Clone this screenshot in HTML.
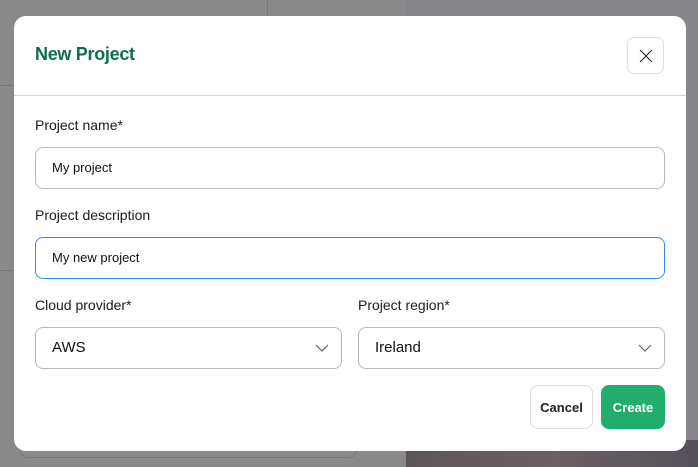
<!DOCTYPE html>
<html><head><style>
*{box-sizing:border-box;margin:0;padding:0}
body{width:698px;height:467px;overflow:hidden;background:#8a8a8a;font-family:"Liberation Sans",sans-serif;position:relative}
.bgr{position:absolute;left:405px;top:0;width:293px;height:467px;background:#86868a}
.bgd{position:absolute;left:406px;top:440px;width:292px;height:27px;background:linear-gradient(90deg,#5c5558,#6a6064,#55505a)}
.vl{position:absolute;left:267px;top:0;width:1px;height:20px;background:#777}
.hl{position:absolute;left:0;top:85px;width:20px;height:1px;background:#777}
.hl2{position:absolute;left:0;top:270px;width:20px;height:1px;background:#777}
.bl{position:absolute;left:20px;top:440px;width:337px;height:18px;border:1px solid #777;border-top:none;border-radius:0 0 8px 8px}
.modal{position:absolute;left:14px;top:16px;width:672px;height:435px;background:#fff;border-radius:12px}
h1{position:absolute;left:21px;top:28px;font-size:18px;font-weight:bold;color:#0b6e4f;letter-spacing:-0.3px}
.close{position:absolute;left:613px;top:21px;width:37px;height:37px;border:1px solid #ddd;border-radius:7px}
.div{position:absolute;left:0;top:79px;width:672px;height:1px;background:#d4d4d4}
.lbl{position:absolute;font-size:14px;color:#1a1a1a}
.in{position:absolute;height:42px;border:1px solid #b8b8b8;border-radius:8px;font-size:13px;color:#111;padding-left:16px;line-height:40px}
.sel{font-size:15px}
.chev{position:absolute;right:12px;top:15px}
.btn{position:absolute;top:369px;height:44px;border-radius:8px;font-size:13px;font-weight:bold;text-align:center;line-height:46px}
</style></head><body>
<div class="bgr"></div><div class="bgd"></div><div class="vl"></div><div class="hl"></div><div class="hl2"></div><div class="bl"></div>
<div class="modal">
<h1>New Project</h1>
<div class="close"><svg width="35" height="35" viewBox="0 0 35 35"><path d="M12 12L24 24M24 12L12 24" stroke="#222" stroke-width="1.1"/></svg></div>
<div class="div"></div>
<div class="lbl" style="left:21px;top:101px">Project name*</div>
<div class="in" style="left:21px;top:131px;width:630px">My project</div>
<div class="lbl" style="left:21px;top:191px">Project description</div>
<div class="in" style="left:21px;top:221px;width:630px;border-color:#3a8ee6">My new project</div>
<div class="lbl" style="left:21px;top:281px">Cloud provider*</div>
<div class="in sel" style="left:21px;top:311px;width:307px">AWS<svg class="chev" width="14" height="10"><path d="M1 2L7 8L13 2" fill="none" stroke="#666" stroke-width="1.2"/></svg></div>
<div class="lbl" style="left:344px;top:281px">Project region*</div>
<div class="in sel" style="left:344px;top:311px;width:307px">Ireland<svg class="chev" width="14" height="10"><path d="M1 2L7 8L13 2" fill="none" stroke="#666" stroke-width="1.2"/></svg></div>
<div class="btn" style="left:516px;width:63px;border:1px solid #ddd;color:#222;line-height:44px">Cancel</div>
<div class="btn" style="left:587px;width:64px;background:#23ad6b;color:#fff">Create</div>
</div>
</body></html>
